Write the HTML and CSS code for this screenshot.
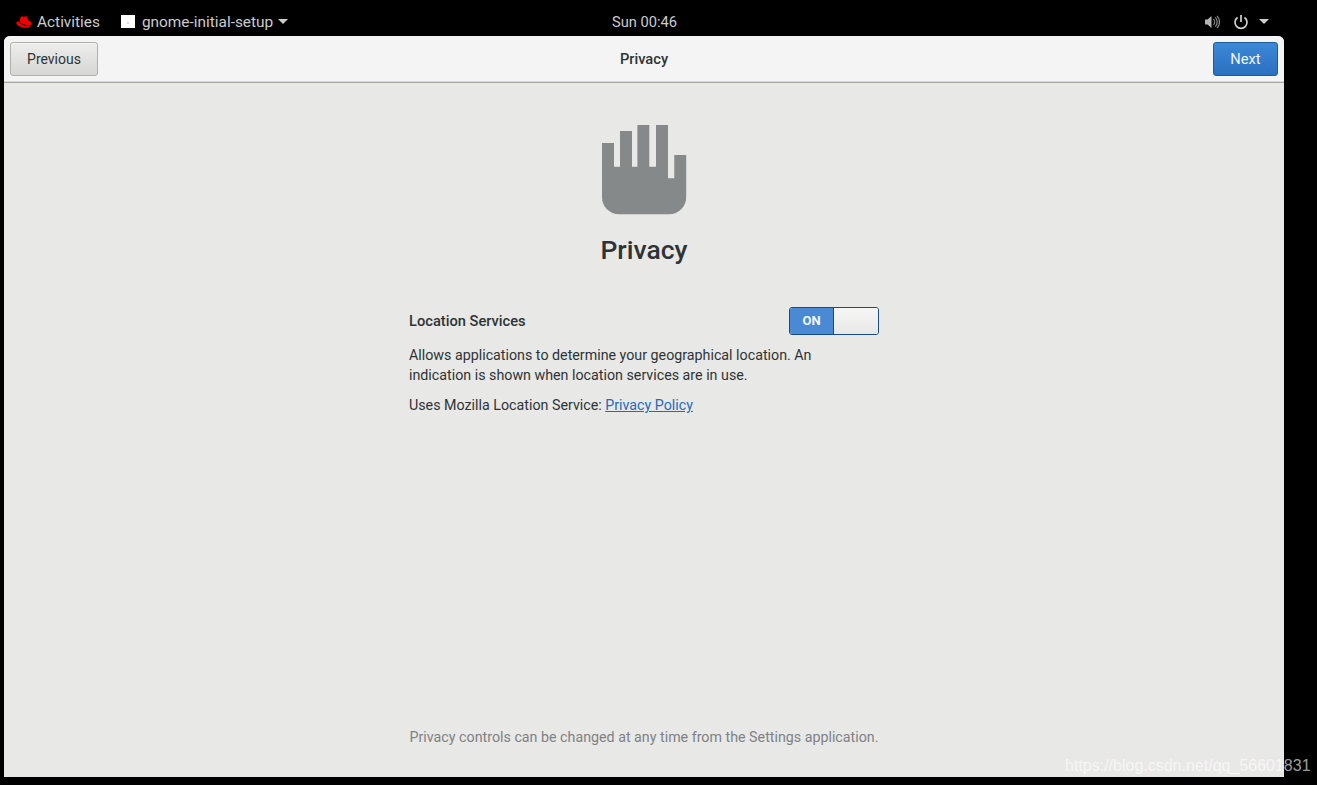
FILE: index.html
```html
<!DOCTYPE html>
<html lang="en">
<head>
  <meta charset="UTF-8">
  <title>Privacy</title>
  <link rel="stylesheet" href="styles.css">
</head>
<body>
  <div class="topbar">
    <div class="topbar-left">
      <svg class="redhat" width="16" height="12" viewBox="0 0 16 12">
        <path fill="#e00" d="M4.800.8C5.600.2 6.700.7 7.500.7 8.500.7 9.500-.2 10.500.3c.9.500 1.300 2.600 1.700 4 1.600.6 3.500 1.600 3.500 3.200 0 1.700-2.200 2.300-4.400 1.800C8.500 8.700 5.500 7.500 3.500 6.300 3.800 5 4 1.500 4.800.8z"/>
        <path fill="#e00" d="M2.800 5.300C1.400 5.500.3 6 .3 7c0 2 3.800 4.400 8 4.700 3.300.2 5.800-.8 5.800-2.300-2 .9-4.600.7-7.200-.3C4.500 8.200 3 6.800 2.800 5.300z"/>
      </svg>
      <span class="activities">Activities</span>
      <svg class="app-icon" width="14" height="13" viewBox="0 0 14 13">
        <path fill="#fff" d="M0 0H14V13H0Z"/>
        <path fill="#c9c9c9" d="M7 6.500l1.500 2H5.500z"/>
      </svg>
      <span class="app-name">gnome-initial-setup</span>
      <span class="caret"></span>
    </div>
    <div class="clock">Sun 00:46</div>
    <div class="topbar-right">
      <svg width="16" height="16" viewBox="0 0 16 16" fill="none">
        <path fill="#b4b4b4" d="M1 5.500h2.500L7.500 2v12L3.500 10.500H1z"/>
        <path stroke="#8c8c8c" stroke-width="1.200" d="M9.500 5.200a4 4 0 0 1 0 5.600M11.300 3.400a6.500 6.500 0 0 1 0 9.200M13 1.800a9 9 0 0 1 0 12.400"/>
      </svg>
      <svg class="power" width="16" height="16" viewBox="0 0 16 16" fill="none">
        <path stroke="#d0d0d0" stroke-width="1.700" d="M8 1v7M4.600 3.500a6 6 0 1 0 6.800 0"/>
      </svg>
      <span class="caret"></span>
    </div>
  </div>

  <div class="window">
    <div class="headerbar">
      <button class="btn">Previous</button>
      <div class="title">Privacy</div>
      <button class="btn btn-next">Next</button>
    </div>
    <div class="content">
      <svg class="hand" width="85" height="90" viewBox="0 0 85 90">
        <path fill="#868989" d="M0 18H12V41.700H18V6H30V41.700H35.400V0H47.300V41.700H54V0H66V53.300H72.300V30H84.200V72.300A17 17 0 0 1 67.200 89.300H17A17 17 0 0 1 0 72.300Z"/>
      </svg>
      <h1>Privacy</h1>
      <div class="panel">
        <div class="setting-row">
          <span class="setting-name">Location Services</span>
          <div class="switch">
            <span class="switch-on">ON</span>
            <span class="switch-knob"></span>
          </div>
        </div>
        <p class="desc">Allows applications to determine your geographical location. An indication is shown when location services are in use.</p>
        <p class="uses">Uses Mozilla Location Service: <a href="#">Privacy Policy</a></p>
      </div>
      <p class="footnote">Privacy controls can be changed at any time from the Settings application.</p>
    </div>
  </div>

  <div class="watermark">https://blog.csdn.net/qq_56601831</div>
</body>
</html>
```

FILE: styles.css
```css
html, body {
  margin: 0;
  padding: 0;
  height: 785px;
  overflow: hidden;
}
body {
  background-color: #000;
  font-family: Roboto, sans-serif;
  font-size: 14.25px;
  color: #2e3436;
  position: relative;
}
.topbar {
  height: 36px;
  width: 1284px;
  display: flex;
  align-items: center;
  justify-content: space-between;
  position: relative;
  color: #ccc;
  font-size: 15.4px;
  padding-top: 7px;
  box-sizing: border-box;
}
.topbar-left {
  display: flex;
  align-items: center;
  padding-left: 16px;
}
.redhat {
  margin-right: 5px;
}
.activities {
  margin-right: 21px;
}
.app-icon {
  margin-right: 7px;
}
.caret {
  width: 0;
  height: 0;
  border-left: 5px solid transparent;
  border-right: 5px solid transparent;
  border-top: 5px solid #ccc;
  margin-left: 5px;
}
.clock {
  position: absolute;
  left: 612px;
  font-size: 14.67px;
}
.topbar-right {
  display: flex;
  align-items: center;
  padding-right: 15px;
}
.power {
  margin: 0 0 0 13px;
}
.topbar-right .caret {
  margin-left: 10px;
}
.window {
  margin-left: 4px;
  width: 1280px;
  height: 741px;
  background: #e8e8e7;
  border-radius: 6px 6px 0 0;
  display: flex;
  flex-direction: column;
}
.headerbar {
  height: 46px;
  flex: none;
  display: flex;
  align-items: center;
  justify-content: space-between;
  padding: 0 6px;
  background: #f4f4f4;
  border-bottom: 1px solid #a5a5a2;
  box-shadow: inset 0 -1px 0 #dcdcdc;
  border-radius: 6px 6px 0 0;
  position: relative;
}
.title {
  position: absolute;
  left: 0;
  right: 0;
  text-align: center;
  font-size: 14.67px;
  font-weight: 500;
  pointer-events: none;
}
.btn {
  font-family: inherit;
  font-size: 14px;
  height: 34px;
  width: 88px;
  color: #2e3436;
  border: 1px solid #b0b0ac;
  border-radius: 3px;
  background: linear-gradient(#ededec, #d6d6d4);
  box-shadow: inset 0 1px 0 #f5f5f5;
}
.btn-next {
  width: 65px;
  font-size: 14.67px;
  color: #f0f5fb;
  border-color: #1b5a9e;
  background: linear-gradient(#3d88d8, #2a70bf);
  box-shadow: none;
}
.content {
  flex: 1;
  display: flex;
  flex-direction: column;
  align-items: center;
}
.hand {
  margin-top: 42px;
}
h1 {
  font-size: 26.5px;
  font-weight: 500;
  margin: 17px 0 0;
  line-height: 36px;
}
.panel {
  width: 470px;
  margin-top: 39px;
  flex: 1;
}
.setting-row {
  height: 28px;
  display: flex;
  align-items: center;
  justify-content: space-between;
}
.setting-name {
  font-size: 14.67px;
  font-weight: 500;
}
.switch {
  width: 88px;
  height: 26px;
  display: flex;
  border: 1px solid #174b85;
  border-radius: 3px;
  overflow: hidden;
}
.switch-on {
  width: 43px;
  background: #4a8ad4;
  color: #f2f6fb;
  font-size: 13px;
  font-weight: 700;
  text-align: center;
  line-height: 26px;
  border-right: 1px solid #174b85;
}
.switch-knob {
  flex: 1;
  background: linear-gradient(#f6f6f6, #e8e8e6);
}
.desc {
  margin: 10px 0 0;
  width: 420px;
  line-height: 20px;
}
.uses {
  margin: 10px 0 0;
  line-height: 20px;
}
.uses a {
  color: #1f6cbd;
}
.footnote {
  margin: 0 0 30px;
  color: #7f8284;
  line-height: 20px;
}
.watermark {
  position: absolute;
  left: 1065px;
  top: 757px;
  font-family: "Liberation Sans", sans-serif;
  font-size: 16px;
  color: rgba(255, 255, 255, 0.62);
  white-space: nowrap;
}
```
